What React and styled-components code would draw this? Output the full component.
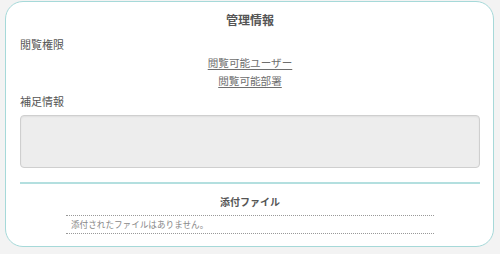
import React from "react";
import styled, { createGlobalStyle } from "styled-components";

const GlobalStyle = createGlobalStyle`
  html, body {
    margin: 0;
    padding: 0;
    background: #f3f3f3;
  }
  body {
    font-family: "Noto Sans CJK JP", "Noto Sans", sans-serif;
    color: #555;
  }
`;

const Card = styled.div`
  box-sizing: border-box;
  margin: 1px 6px 0 5px;
  height: 246px;
  background: #fff;
  border: 1px solid #a6d9d9;
  border-radius: 18px;
  padding: 8px 13px 0 14px;
`;

const Title = styled.div`
  font-size: ${(p) => p.size || 12}px;
  font-weight: bold;
  line-height: ${(p) => p.lh || 20}px;
  text-align: center;
  color: #555;
  margin-top: ${(p) => p.mt || 0}px;
`;

const Label = styled.div`
  font-size: 11px;
  line-height: 18px;
  color: #555;
  margin-top: ${(p) => p.mt || 0}px;
`;

const LinkList = styled.div`
  display: flex;
  flex-direction: column;
  align-items: center;
  margin-top: 1px;
`;

const Link = styled.a`
  font-size: 10.6px;
  line-height: 18px;
  color: #6e6e6e;
  text-decoration: underline;
  text-underline-offset: 2px;
`;

const NoteBox = styled.div`
  box-sizing: border-box;
  margin-top: 5px;
  height: 53px;
  background: #ededed;
  border: 1px solid #cfcfcf;
  border-radius: 4px;
  box-shadow: inset 0 1px 2px rgba(0, 0, 0, 0.06);
`;

const Divider = styled.div`
  margin-top: 14px;
  height: 2px;
  background: #b3dfdf;
`;

const FileList = styled.div`
  margin: 5px 46px 0 46px;
  border-top: 1px dotted #999;
  border-bottom: 1px dotted #999;
`;

const FileEmpty = styled.div`
  font-size: 8.6px;
  line-height: 17px;
  color: #888;
  padding-left: 5px;
`;

export default function App() {
  return (
    <>
      <GlobalStyle />
      <Card>
        <Title>管理情報</Title>
        <Label mt={5}>閲覧権限</Label>
        <LinkList>
          <Link>閲覧可能ユーザー</Link>
          <Link>閲覧可能部署</Link>
        </LinkList>
        <Label mt={2}>補足情報</Label>
        <NoteBox />
        <Divider />
        <Title size={10} lh={16} mt={10}>
          添付ファイル
        </Title>
        <FileList>
          <FileEmpty>添付されたファイルはありません。</FileEmpty>
        </FileList>
      </Card>
    </>
  );
}
